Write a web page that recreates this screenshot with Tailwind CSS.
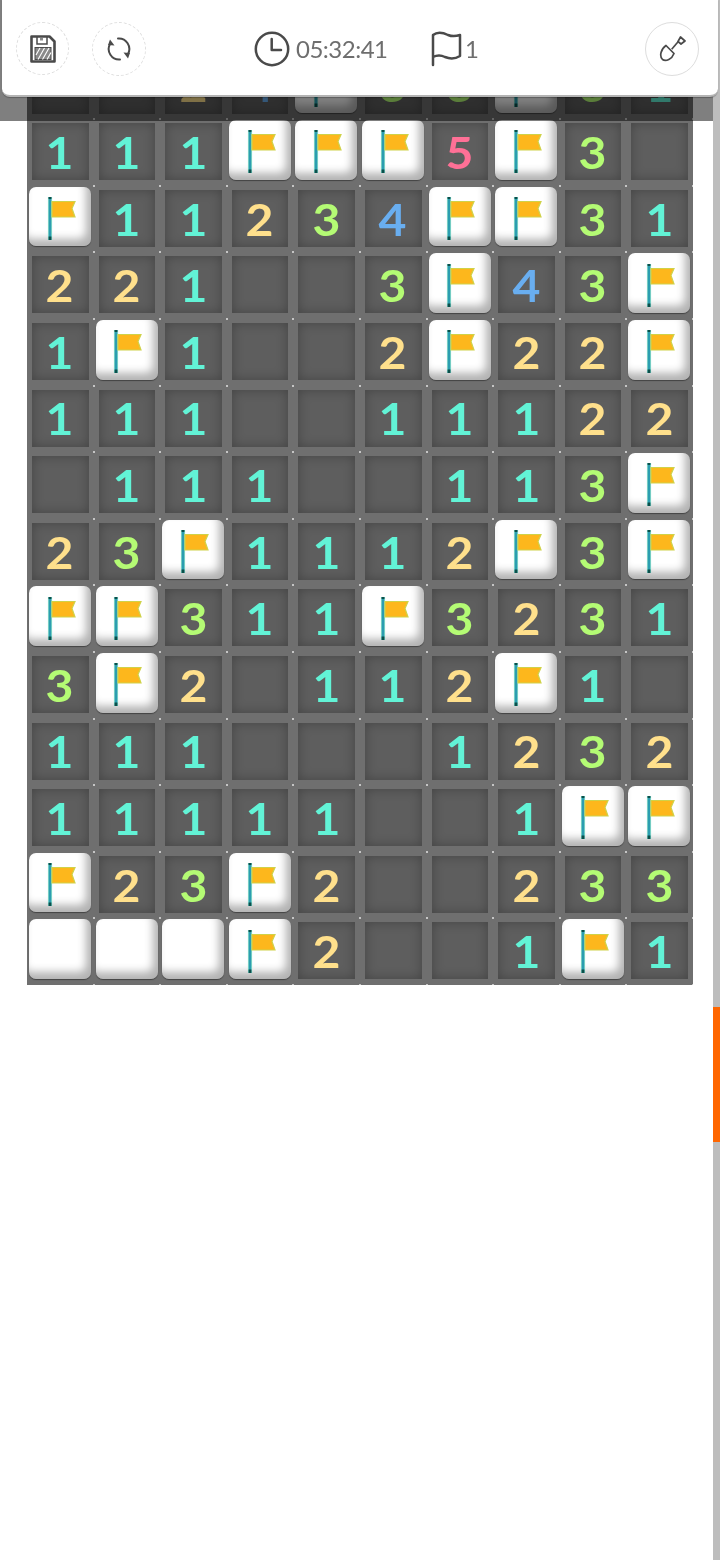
<!doctype html>
<html>
<head>
<meta charset="utf-8">
<script src="https://cdn.jsdelivr.net/npm/@tailwindcss/browser@4"></script>
</head>
<body class="bg-white font-['Lato',sans-serif]">
<div class="relative h-[1560px] w-[720px] overflow-hidden bg-white blur-[0.4px]">
  <svg class="absolute h-0 w-0">
    <defs>
      <g id="flag">
        <path d="M3 1v43" stroke="#a5ecd0" stroke-width="4.200" fill="none"/>
        <path d="M3 1v43" stroke="#2c9db0" stroke-width="2.800" fill="none"/>
        <path d="M3 40.500v3.500M3 1v2" stroke="#0c4f4a" stroke-width="2.800" fill="none"/>
        <path d="M5 5.500h23l-3 7 3 8.500H5z" fill="#fdb71c" stroke="#cfd24a" stroke-width="1.200"/>
      </g>
    </defs>
  </svg>

  <main id="board" class="absolute left-[27px] top-[52.600px] isolate grid w-[666px] grid-cols-10 bg-[#6f6f6f]"></main>

  <div class="absolute inset-x-0 top-0 h-[121px] bg-black/50"></div>

  <div class="absolute right-0 top-0 h-[1560px] w-[7px] bg-[#bdbdbd]">
    <div class="absolute left-0 top-[1007px] h-[135px] w-full bg-[#ff6600]"></div>
  </div>

  <header class="absolute inset-x-0 top-0 z-20 h-[97px] px-[2px]">
    <div class="relative h-full rounded-b-[8px] border-b-2 border-[#b4b4b4] bg-white shadow-[0_1px_1px_rgba(0,0,0,0.25)]">
      <button class="absolute left-[14px] top-[22px] flex size-[53px] items-center justify-center rounded-full border border-dashed border-[#dddddd]">
        <svg viewBox="0 0 26 28" class="h-[28px] w-[26px]" fill="none">
          <path d="M1.500 1.500h18l5 5v20h-23z" stroke="#4a4a4a" stroke-width="2.600" stroke-linejoin="round"/>
          <path d="M7 2v7h10V2" stroke="#4a4a4a" stroke-width="1.500"/>
          <path d="M10 3h3v2.500h-3z" fill="#8a8a8a"/>
          <rect x="5" y="12.500" width="16" height="12" fill="#8a8a8a" stroke="#4a4a4a" stroke-width="1"/>
          <path d="M6 20l4-7M8 24.500l6.500-11.500M12.500 24.500l6.500-11.500M17 24.500l4-7" stroke="#ffffff" stroke-width="1.100"/>
        </svg>
      </button>
      <button class="absolute left-[90px] top-[22px] flex size-[54px] items-center justify-center rounded-full border border-dashed border-[#dddddd]">
        <svg viewBox="0 0 24 24" class="size-[24px]" fill="none">
          <path d="M11 1.500A10.500 10.500 0 0 1 21 17" stroke="#4a4a4a" stroke-width="2" stroke-linecap="round"/>
          <path d="M13 22.500A10.500 10.500 0 0 1 3 7" stroke="#4a4a4a" stroke-width="2" stroke-linecap="round"/>
          <path d="M16.500 15.500l6.500 0.500-2 5.500z" fill="#4a4a4a"/>
          <path d="M7.500 8.500l-6.500-0.500 2-5.500z" fill="#4a4a4a"/>
        </svg>
      </button>
      <div class="absolute left-[252px] top-[31px] flex items-center text-[#6e6e6e]">
        <svg viewBox="0 0 36 36" class="size-[36px]" fill="none" stroke="#4a4a4a" stroke-width="2.500" stroke-linecap="round" stroke-linejoin="round">
          <circle cx="18" cy="18" r="16.200"/>
          <path d="M17.700 8v11H27"/>
        </svg>
        <span class="ml-[6px] text-[24px] leading-[36px] tracking-[-0.500px]">05:32:41</span>
      </div>
      <div class="absolute left-[428px] top-[31px] flex items-center text-[#6e6e6e]">
        <svg viewBox="0 0 32 36" class="h-[36px] w-[32px]" fill="none" stroke="#4a4a4a" stroke-width="2.500" stroke-linecap="round" stroke-linejoin="round">
          <path d="M3 34V4C8 0 14 2 18 4C23 6 27 5 30 4V25C25 28 20 28 15 26C11 24 7 24 3 26"/>
        </svg>
        <span class="ml-[3px] text-[24px] leading-[36px]">1</span>
      </div>
      <button class="absolute right-[19px] top-[22px] flex size-[54px] items-center justify-center rounded-full border border-[#dddddd]">
        <svg viewBox="0 0 27 27" class="size-[27px]" fill="none" stroke="#4a4a4a" stroke-width="1.700" stroke-linejoin="round">
          <path d="M12.700 13.300L19.300 5.500"/>
          <path d="M19 5.500L21.500 1L26 5L22 8z"/>
          <path d="M7 9.500L15 17.500C13 23 7 26 3.500 23.500C0 20 2 13 7 9.500z"/>
        </svg>
      </button>
    </div>
  </header>
</div>
<script>
  const rows = [
    "__24F33F31",
    "111FFF5F3_",
    "F11234FF31",
    "221__3F43F",
    "1F1__2F22F",
    "111__11122",
    "_111__113F",
    "23F1112F3F",
    "FF311F3231",
    "3F2_112F1_",
    "111___1232",
    "11111__1FF",
    "F23F2__233",
    "WWWF2__1F1"
  ];
  const colours = {
    "1": "text-[#62f3d6]",
    "2": "text-[#ffe08c]",
    "3": "text-[#b4fb74]",
    "4": "text-[#69aef0]",
    "5": "text-[#ff7096]"
  };
  const dot = '<i class="absolute -bottom-[1px] -right-[1px] z-10 size-[2px] rounded-full bg-white/80"></i>';
  const well = "relative flex h-[66.600px] items-center justify-center font-bold text-[43px] leading-none before:absolute before:left-[5px] before:right-[5px] before:top-[4px] before:bottom-[5.500px] before:bg-[#5e5e5e] before:shadow-[inset_0_0_12px_rgba(0,0,0,0.28)]";
  const raised = "relative flex h-[66.600px] items-center justify-center before:absolute before:left-[2px] before:right-[2.500px] before:top-[1px] before:bottom-[6px] before:rounded-[7px] before:bg-white before:shadow-[inset_-5px_-7px_9px_rgba(0,0,0,0.3),0_1px_1px_rgba(0,0,0,0.4)]";
  const board = document.getElementById("board");
  let html = "";
  for (const row of rows) {
    for (const c of row) {
      if (c === "F") {
        html += '<div class="' + raised + '"><svg viewBox="0 0 32 46" class="relative ml-[5px] h-[46px] w-[32px]"><use href="#flag"/></svg>' + dot + '</div>';
      } else if (c === "W") {
        html += '<div class="' + raised + '">' + dot + '</div>';
      } else if (c === "_") {
        html += '<div class="' + well + '">' + dot + '</div>';
      } else {
        html += '<div class="' + well + " " + colours[c] + '"><span class="relative -ml-[1px] scale-x-112">' + c + '</span>' + dot + '</div>';
      }
    }
  }
  board.innerHTML = html;
</script>
</body>
</html>
